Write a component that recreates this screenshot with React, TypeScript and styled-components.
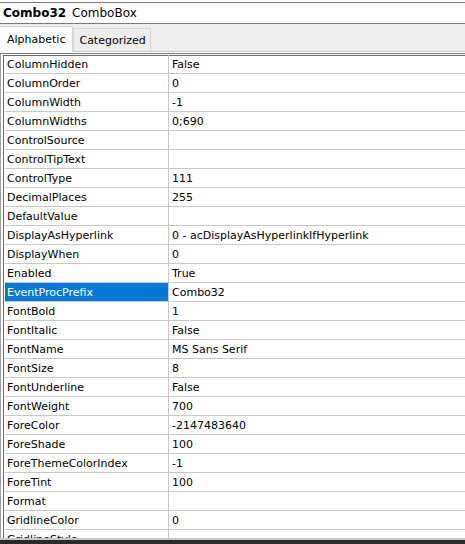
import React from 'react';
import styled, {createGlobalStyle} from 'styled-components';

const GlobalStyle = createGlobalStyle`
  html, body {
    margin: 0;
    padding: 0;
    background: #ffffff;
  }
  body {
    font-family: Tahoma, "DejaVu Sans", "Liberation Sans", sans-serif;
    font-size: 11px;
    color: #000;
    overflow: hidden;
  }
`;

interface Property {
  name: string;
  value: string;
}

const properties: Property[] = [
  {name: 'ColumnHidden', value: 'False'},
  {name: 'ColumnOrder', value: '0'},
  {name: 'ColumnWidth', value: '-1'},
  {name: 'ColumnWidths', value: '0;690'},
  {name: 'ControlSource', value: ''},
  {name: 'ControlTipText', value: ''},
  {name: 'ControlType', value: '111'},
  {name: 'DecimalPlaces', value: '255'},
  {name: 'DefaultValue', value: ''},
  {name: 'DisplayAsHyperlink', value: '0 - acDisplayAsHyperlinkIfHyperlink'},
  {name: 'DisplayWhen', value: '0'},
  {name: 'Enabled', value: 'True'},
  {name: 'EventProcPrefix', value: 'Combo32'},
  {name: 'FontBold', value: '1'},
  {name: 'FontItalic', value: 'False'},
  {name: 'FontName', value: 'MS Sans Serif'},
  {name: 'FontSize', value: '8'},
  {name: 'FontUnderline', value: 'False'},
  {name: 'FontWeight', value: '700'},
  {name: 'ForeColor', value: '-2147483640'},
  {name: 'ForeShade', value: '100'},
  {name: 'ForeThemeColorIndex', value: '-1'},
  {name: 'ForeTint', value: '100'},
  {name: 'Format', value: ''},
  {name: 'GridlineColor', value: '0'},
  {name: 'GridlineStyle', value: ''},
];

const SELECTED = 'EventProcPrefix';

export default function App() {
  return (
    <>
      <GlobalStyle />
      <StyledWindow>
        <StyledHeader>
          <StyledObjectName>Combo32</StyledObjectName>
          <StyledObjectType>ComboBox</StyledObjectType>
        </StyledHeader>
        <StyledTabStrip>
          <StyledTab $active>Alphabetic</StyledTab>
          <StyledTab>Categorized</StyledTab>
        </StyledTabStrip>
        <StyledGrid>
          {properties.map((p) => (
            <StyledRow key={p.name}>
              <StyledNameCell $selected={p.name === SELECTED}>
                {p.name}
              </StyledNameCell>
              <StyledValueCell>{p.value}</StyledValueCell>
            </StyledRow>
          ))}
        </StyledGrid>
        <StyledStatusBar />
      </StyledWindow>
    </>
  );
}

const StyledWindow = styled.div`
  width: 465px;
  height: 544px;
  display: flex;
  flex-direction: column;
  overflow: hidden;
  background: #fff;
`;

const StyledHeader = styled.div`
  height: 20px;
  margin-top: 2px;
  border-top: 1px solid #7a7a7a;
  border-bottom: 1px solid #7a7a7a;
  display: flex;
  align-items: center;
  gap: 6px;
  padding-left: 3px;
  font-size: 12px;
  flex-shrink: 0;
`;

const StyledObjectName = styled.span`
  font-weight: bold;
`;

const StyledObjectType = styled.span``;

const StyledTabStrip = styled.div`
  height: 27px;
  background: #eeeeee;
  display: flex;
  align-items: flex-end;
  flex-shrink: 0;
  border-bottom: 1px solid #c8c8c8;
`;

const StyledTab = styled.div<{$active?: boolean}>`
  height: ${(p) => (p.$active ? '26px' : '23px')};
  box-sizing: border-box;
  display: flex;
  align-items: center;
  padding: ${(p) => (p.$active ? '0 7px 0 7px' : '0 4px 0 5px')};
  font-size: 11px;
  background: ${(p) => (p.$active ? '#ffffff' : '#eeeeee')};
  border: 1px solid #d6d6d6;
  border-bottom: none;
  border-left: ${(p) => (p.$active ? 'none' : '1px solid #d6d6d6')};
  margin-bottom: ${(p) => (p.$active ? '-1px' : '0')};
`;

const StyledGrid = styled.div`
  flex: 1;
  margin-top: 1px;
  border-top: 1px solid #7a7a7a;
  border-left: 1px solid #a0a0a0;
  box-shadow: inset 2px 1px 0 #fff, inset 3px 2px 0 #6a6a6a;
  padding-left: 4px;
  padding-top: 1px;
  overflow: hidden;
`;

const StyledRow = styled.div`
  display: grid;
  grid-template-columns: 164px 1fr;
  height: 19px;
  box-sizing: border-box;
  border-bottom: 1px solid #c8c8c8;
`;

const StyledNameCell = styled.div<{$selected?: boolean}>`
  display: flex;
  align-items: center;
  padding-left: 2px;
  border-right: 1px solid #c8c8c8;
  background: ${(p) => (p.$selected ? '#0078d7' : 'transparent')};
  color: ${(p) => (p.$selected ? '#ffffff' : '#000000')};
  white-space: nowrap;
  overflow: hidden;
`;

const StyledValueCell = styled.div`
  display: flex;
  align-items: center;
  padding-left: 3px;
  white-space: nowrap;
  overflow: hidden;
`;

const StyledStatusBar = styled.div`
  height: 4px;
  flex-shrink: 0;
  border-top: 2px solid #c8c8c8;
  background: #2b2b2b;
`;
